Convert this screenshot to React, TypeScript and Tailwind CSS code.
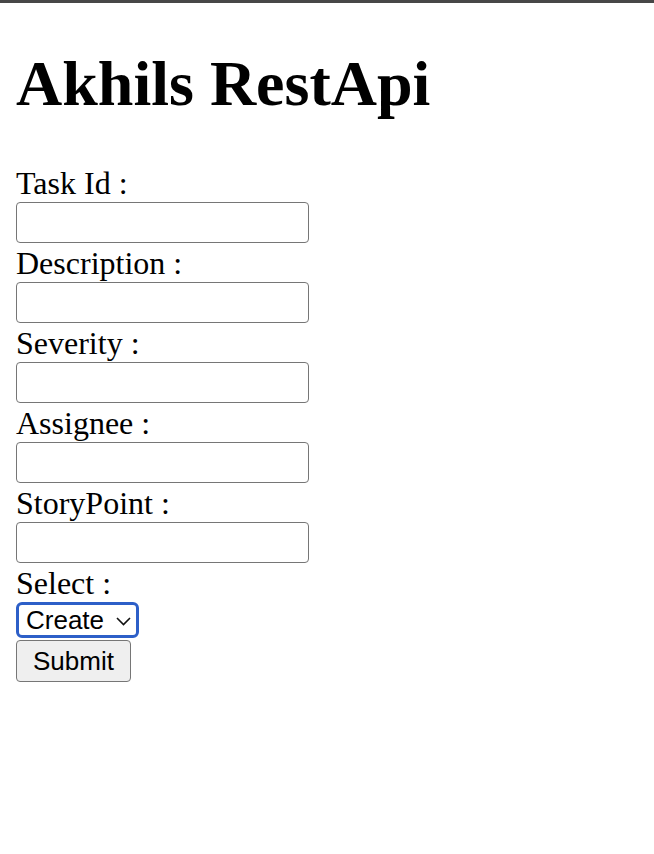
import { useState } from "react";

const fields = ["Task Id", "Description", "Severity", "Assignee", "StoryPoint"];

const App = () => {
  const [values, setValues] = useState<Record<string, string>>({});
  const [action, setAction] = useState("Create");

  return (
    <div className="min-h-[854px] bg-white text-black">
      <div className="h-[3px] bg-[#474747]"></div>
      <div className="px-4">
        <h1 className="mt-[49px] text-[64px] leading-[64px] font-bold font-['Liberation_Serif',serif]">
          Akhils RestApi
        </h1>
        <form className="mt-[47px] font-['Liberation_Serif',serif]" onSubmit={(e) => e.preventDefault()}>
          {fields.map((f) => (
            <div key={f}>
              <p className="h-[39px] text-[32px] leading-[41px]">{f} :</p>
              <input
                className="block w-[293px] h-[41px] border border-[#767676] rounded-[4px] bg-white px-2 text-[26px]"
                value={values[f] ?? ""}
                onChange={(e) => setValues({ ...values, [f]: e.target.value })}
              />
            </div>
          ))}
          <p className="h-[39px] text-[32px] leading-[41px]">Select :</p>
          <div className="relative w-[123px] h-[36px]">
            <select
              className="appearance-none w-full h-full border-[3px] border-[#2d5fc8] rounded-[6px] bg-white pl-[7px] text-[26px] leading-[30px] font-['Liberation_Sans',Arial,sans-serif] outline-none"
              value={action}
              onChange={(e) => setAction(e.target.value)}
            >
              <option>Create</option>
              <option>Update</option>
              <option>Delete</option>
            </select>
            <svg
              className="absolute right-[8px] top-[15px] pointer-events-none"
              width="15"
              height="9"
              viewBox="0 0 15 9"
              fill="none"
            >
              <path d="M1 1l6.5 6.5L14 1" stroke="#111" strokeWidth="1.6" />
            </svg>
          </div>
          <button
            type="submit"
            className="block mt-[2px] w-[115px] h-[42px] border border-[#767676] rounded-[4px] bg-[#efefef] text-[26px] leading-none font-['Liberation_Sans',Arial,sans-serif]"
          >
            Submit
          </button>
        </form>
      </div>
    </div>
  );
};

export default App;
